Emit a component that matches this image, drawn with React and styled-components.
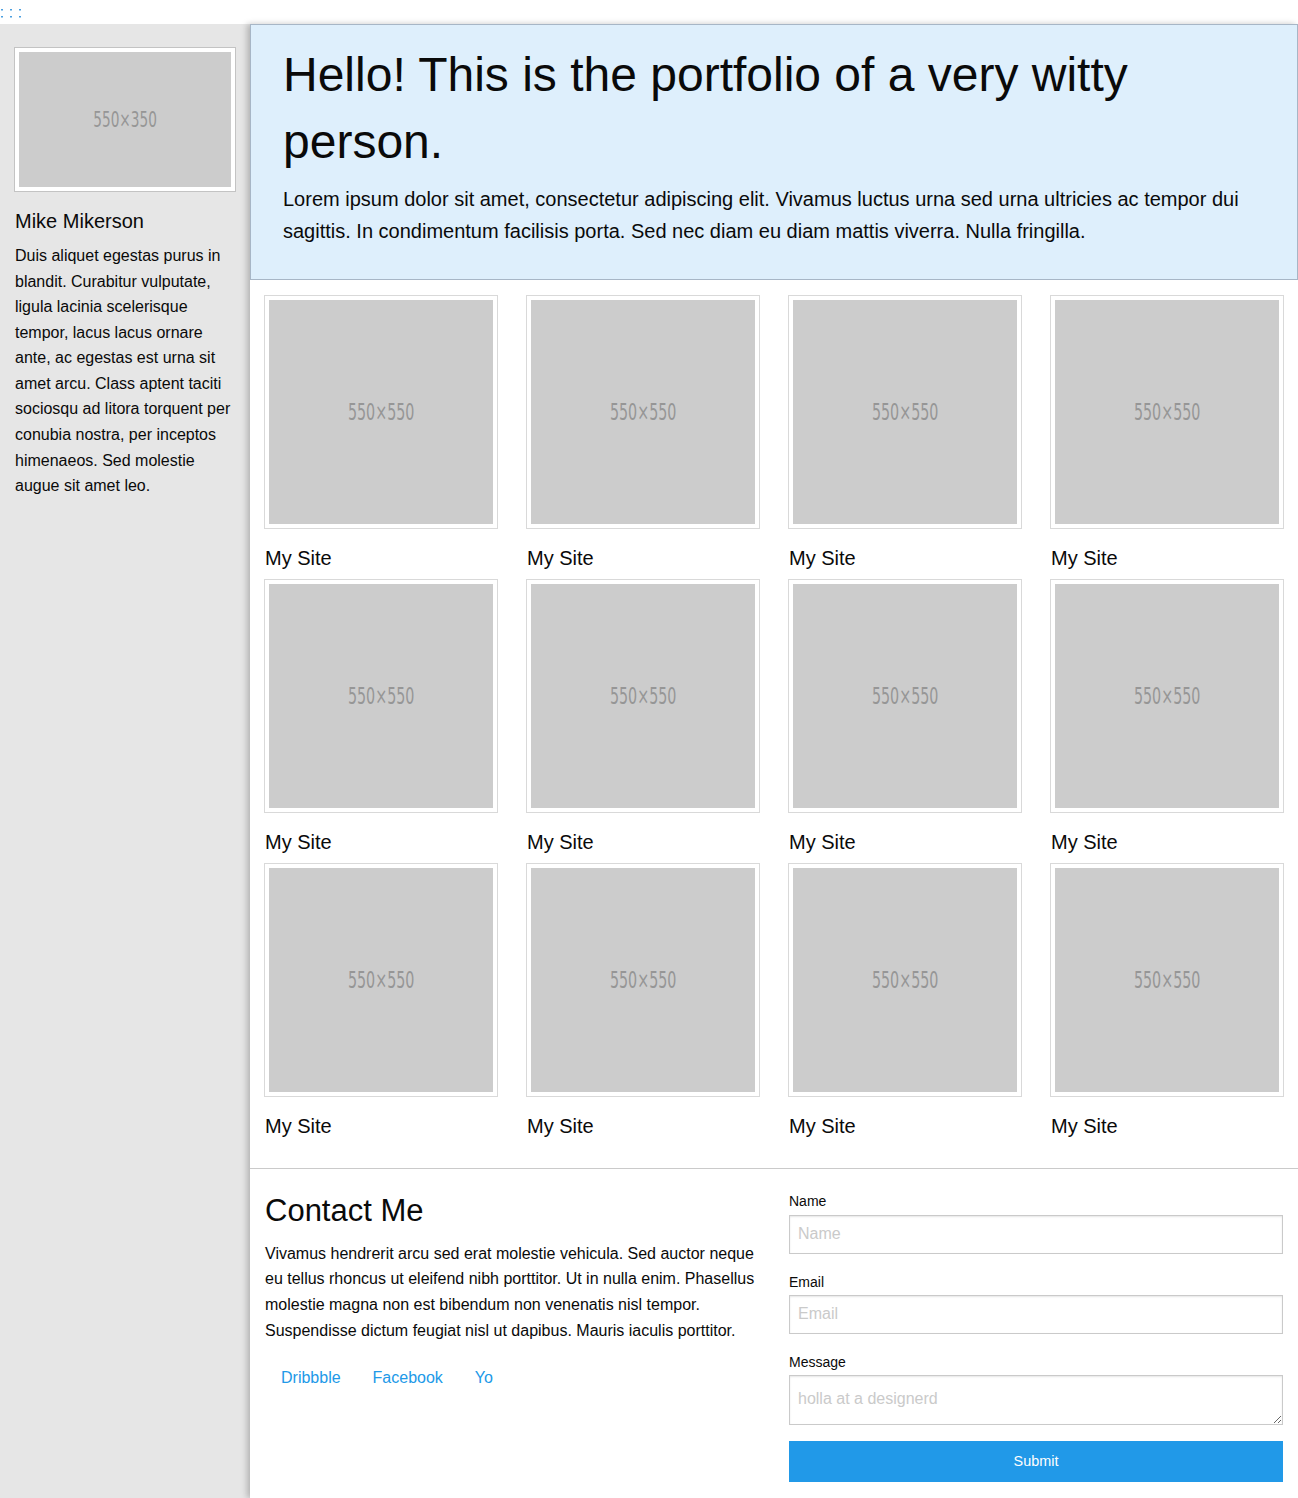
import React from "react";
import styled, { createGlobalStyle } from "styled-components";

const GlobalStyle = createGlobalStyle`
  html, body {
    margin: 0;
    padding: 0;
    background: #fff;
  }
  body {
    font-family: "Liberation Sans", Arial, sans-serif;
    color: #0a0a0a;
  }
  * {
    box-sizing: border-box;
  }
`;

const Page = styled.div`
  display: grid;
  grid-template-columns: 250px 1fr;
  grid-template-rows: 24px auto;
  width: 1298px;
  min-height: 1498px;
`;

const TopBar = styled.div`
  grid-column: 1 / -1;
  height: 24px;
  background: #fff;
`;

const Sidebar = styled.aside`
  background: #e6e6e6;
  padding: 24px 15px;
`;

const Main = styled.main`
  position: relative;
  z-index: 1;
  background: #fff;
  box-shadow: -3px 0 6px rgba(0, 0, 0, 0.22);
`;

const Thumb = styled.div`
  border: 4px solid #fff;
  box-shadow: 0 0 0 1px rgba(0, 0, 0, 0.15);
  background: #fff;
`;

const Placeholder = styled.div`
  display: flex;
  align-items: center;
  justify-content: center;
  aspect-ratio: ${(p) => p.$ratio};
  background: #cccccc;
  color: #969696;
  font-family: "Liberation Sans Narrow", "DejaVu Sans Condensed", "Liberation Sans", sans-serif;
  font-size: ${(p) => p.$size}px;
`;

const PlaceholderText = styled.span`
  display: inline-block;
  transform: scaleX(0.69);
`;

const Name = styled.h4`
  margin: 16px 0 8px;
  font-size: 20px;
  line-height: 28px;
  font-weight: normal;
`;

const SideText = styled.p`
  margin: 0;
  font-size: 16px;
  line-height: 25.6px;
`;

const Callout = styled.header`
  background: #deeffc;
  border: 1px solid #a7b6c6;
  padding: 16px 32px;
`;

const Title = styled.h1`
  margin: 0 0 8px;
  font-size: 48px;
  line-height: 67.2px;
  font-weight: normal;
`;

const Lead = styled.p`
  margin: 0 0 16px;
  font-size: 20px;
  line-height: 32px;
`;

const Work = styled.section`
  display: grid;
  grid-template-columns: repeat(4, 1fr);
  column-gap: 30px;
  padding: 16px 15px 20px;
`;

const Card = styled.div`
  display: flex;
  flex-direction: column;
`;

const CardTitle = styled.h5`
  margin: 16px 0 8px;
  font-size: 20px;
  line-height: 28px;
  font-weight: normal;
`;

const Contact = styled.section`
  display: grid;
  grid-template-columns: 1fr 1fr;
  border-top: 1px solid #cacaca;
  padding-top: 20px;
`;

const Column = styled.div`
  padding: 0 15px;
`;

const ContactTitle = styled.h3`
  margin: 0 0 8px;
  font-size: 31px;
  line-height: 43.4px;
  font-weight: normal;
`;

const ContactText = styled.p`
  margin: 0 0 16px;
  font-size: 16px;
  line-height: 25.6px;
`;

const Menu = styled.ul`
  display: flex;
  margin: 0;
  padding: 0;
  list-style: none;
`;

const MenuLink = styled.a`
  display: block;
  padding: 11.2px 16px;
  font-size: 16px;
  line-height: 1;
  color: #2199e8;
  text-decoration: none;
`;

const Label = styled.label`
  display: block;
  font-size: 14px;
  line-height: 25.2px;
`;

const fieldStyles = `
  display: block;
  width: 100%;
  margin: 0 0 16px;
  padding: 8px;
  border: 1px solid #cacaca;
  box-shadow: inset 0 1px 2px rgba(10, 10, 10, 0.1);
  background: #fff;
  font-family: "Liberation Sans", Arial, sans-serif;
  font-size: 16px;
  color: #0a0a0a;
  outline: none;
  &::placeholder {
    color: #cacaca;
  }
`;

const Input = styled.input`
  ${fieldStyles}
  height: 39px;
`;

const TextArea = styled.textarea`
  ${fieldStyles}
  height: 50px;
  padding: 11px 8px 5px;
  line-height: 24px;
`;

const Button = styled.button`
  display: block;
  width: 100%;
  height: 41px;
  border: 1px solid transparent;
  background: #2199e8;
  color: #fefefe;
  font-family: "Liberation Sans", Arial, sans-serif;
  font-size: 14.4px;
  line-height: 1;
  cursor: pointer;
`;

const Grip = () => (
  <svg width="22" height="20" viewBox="0 0 22 20" style={{ display: "block" }}>
    {[1, 10, 19].map((x) =>
      [9, 16].map((y) => (
        <rect key={`${x}-${y}`} x={x} y={y} width="2" height="1.5" fill="#4a9fe0" />
      ))
    )}
  </svg>
);

const sites = Array.from({ length: 12 }, (_, i) => i);

export default function App() {
  return (
    <>
      <GlobalStyle />
      <Page>
        <TopBar>
          <Grip />
        </TopBar>

        <Sidebar>
          <Thumb>
            <Placeholder $ratio="550 / 350" $size={22}>
              <PlaceholderText>550×350</PlaceholderText>
            </Placeholder>
          </Thumb>
          <Name>Mike Mikerson</Name>
          <SideText>
            Duis aliquet egestas purus in blandit. Curabitur vulputate, ligula
            lacinia scelerisque tempor, lacus lacus ornare ante, ac egestas est
            urna sit amet arcu. Class aptent taciti sociosqu ad litora torquent
            per conubia nostra, per inceptos himenaeos. Sed molestie augue sit
            amet leo.
          </SideText>
        </Sidebar>

        <Main>
          <Callout>
            <Title>Hello! This is the portfolio of a very witty person.</Title>
            <Lead>
              Lorem ipsum dolor sit amet, consectetur adipiscing elit. Vivamus
              luctus urna sed urna ultricies ac tempor dui sagittis. In
              condimentum facilisis porta. Sed nec diam eu diam mattis viverra.
              Nulla fringilla.
            </Lead>
          </Callout>

          <Work>
            {sites.map((i) => (
              <Card key={i}>
                <Thumb>
                  <Placeholder $ratio="1 / 1" $size={23}>
                    <PlaceholderText>550×550</PlaceholderText>
                  </Placeholder>
                </Thumb>
                <CardTitle>My Site</CardTitle>
              </Card>
            ))}
          </Work>

          <Contact>
            <Column>
              <ContactTitle>Contact Me</ContactTitle>
              <ContactText>
                Vivamus hendrerit arcu sed erat molestie vehicula. Sed auctor
                neque eu tellus rhoncus ut eleifend nibh porttitor. Ut in nulla
                enim. Phasellus molestie magna non est bibendum non venenatis
                nisl tempor. Suspendisse dictum feugiat nisl ut dapibus. Mauris
                iaculis porttitor.
              </ContactText>
              <Menu>
                <li>
                  <MenuLink href="#">Dribbble</MenuLink>
                </li>
                <li>
                  <MenuLink href="#">Facebook</MenuLink>
                </li>
                <li>
                  <MenuLink href="#">Yo</MenuLink>
                </li>
              </Menu>
            </Column>
            <Column>
              <form onSubmit={(e) => e.preventDefault()}>
                <Label>Name</Label>
                <Input type="text" placeholder="Name" />
                <Label>Email</Label>
                <Input type="email" placeholder="Email" />
                <Label>Message</Label>
                <TextArea placeholder="holla at a designerd" />
                <Button type="submit">Submit</Button>
              </form>
            </Column>
          </Contact>
        </Main>
      </Page>
    </>
  );
}
